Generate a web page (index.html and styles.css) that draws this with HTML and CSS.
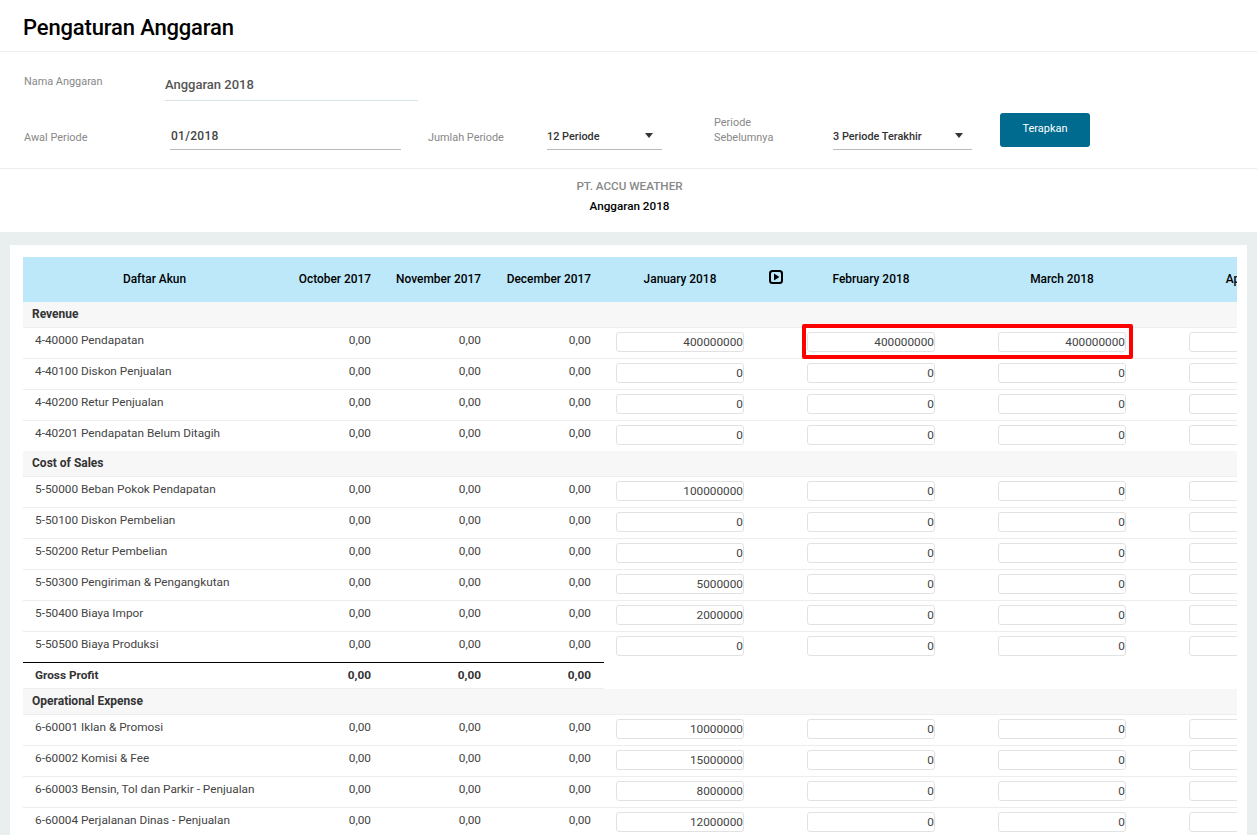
FILE: index.html
```html
<!DOCTYPE html>
<html lang="id">
<head>
<meta charset="utf-8">
<title>Pengaturan Anggaran</title>
<link rel="stylesheet" href="styles.css">
</head>
<body>
<header class="page-head"><h1>Pengaturan Anggaran</h1></header>
<section class="form">
  <div class="row-name">
    <span class="lbl lbl-name">Nama Anggaran</span>
    <span class="name-value">Anggaran 2018</span>
  </div>
  <div class="row-period">
    <span class="lbl lbl-awal">Awal Periode</span>
    <span class="field f-awal">01/2018</span>
    <span class="lbl lbl-jumlah">Jumlah Periode</span>
    <span class="select s-jumlah">12 Periode<i class="caret"></i></span>
    <span class="lbl lbl-prev">Periode<br>Sebelumnya</span>
    <span class="select s-prev">3 Periode Terakhir<i class="caret"></i></span>
    <button class="apply" type="button">Terapkan</button>
  </div>
</section>
<section class="report-head">
  <div class="company">PT. ACCU WEATHER</div>
  <div class="report-name">Anggaran 2018</div>
</section>
<main class="stage">
  <div class="panel">
    <div class="scroller">
      <table class="budget">
        <colgroup><col class="c-acc"><col class="c-num"><col class="c-num"><col class="c-num"><col class="c-in"><col class="c-in"><col class="c-in"><col class="c-in"></colgroup>
        <thead>
          <tr>
            <th class="th-acc">Daftar Akun</th>
            <th class="th-num">October 2017</th>
            <th class="th-num">November 2017</th>
            <th class="th-num">December 2017</th>
            <th class="th-in">January 2018<svg class="next" viewBox="0 0 14 14" width="14" height="14"><rect x="1" y="1" width="12" height="12" rx="2.5" fill="none" stroke="#000" stroke-width="2"/><path d="M5 3.6v6.8L10.4 7z" fill="#000"/></svg></th>
            <th class="th-in">February 2018</th>
            <th class="th-in">March 2018</th>
            <th class="th-in">April 2018</th>
          </tr>
        </thead>
        <tbody id="rows"></tbody>
      </table>
      <div class="highlight"></div>
    </div>
  </div>
</main>
<script src="app.js"></script>
</body>
</html>
```
FILE: styles.css
```css
* { box-sizing: border-box; }
html, body { margin: 0; height: 835px; overflow: hidden; }
body { background: #fff; font-family: Roboto, "Liberation Sans", sans-serif; color: #333; display: flex; flex-direction: column; }

.page-head { height: 52px; border-bottom: 1px solid #eceeee; padding: 14px 23px 0; }
.page-head h1 { margin: 0; font-size: 22px; line-height: 28px; font-weight: 500; color: #000; letter-spacing: -0.15px; }

.form { height: 117px; border-bottom: 1px solid #eceeee; padding-left: 24px; position: relative; }
.lbl { font-size: 10.9px; line-height: 15px; color: #888; font-weight: 400; }
.row-name { display: flex; height: 49px; padding-top: 22px; }
.lbl-name { width: 141px; }
.name-value { width: 253px; height: 28px; margin-top: -1px; line-height: 24px; font-size: 13px; font-weight: 500; color: #555; border-bottom: 1px solid #d8e2e6; }
.row-period { display: flex; align-items: flex-start; height: 66px; position: relative; }
.lbl-awal { width: 146px; margin-top: 29px; }
.field { width: 231px; height: 30px; margin-top: 19px; padding: 6px 0 0 1px; font-size: 12px; font-weight: 500; line-height: 20px; border-bottom: 1px solid #bbb; color: #444; letter-spacing: .3px; }
.lbl-jumlah { width: 119px; margin-left: 27px; margin-top: 29px; }
.select { position: relative; height: 30px; margin-top: 19px; padding-top: 6px; font-size: 10.9px; font-weight: 500; line-height: 21px; border-bottom: 1px solid #bbb; color: #333; }
.s-jumlah { width: 115px; }
.lbl-prev { width: 119px; margin-left: 52px; margin-top: 14px; }
.s-prev { width: 139px; }
.caret { position: absolute; right: 9px; top: 13px; border: 4.5px solid transparent; border-top: 5px solid #333; border-bottom: 0; }
.apply { width: 90px; height: 34px; margin: 12px 0 0 28px; border: 0; border-radius: 3px; background: #006b8f; color: #fff; font: 400 11px/30px Roboto, "Liberation Sans", sans-serif; padding: 0 0 3px; }

.report-head { height: 63px; text-align: center; padding: 10px 0 0 2px; }
.company { font-size: 11.7px; line-height: 14px; font-weight: 500; color: #888; }
.report-name { font-size: 11.7px; line-height: 14px; font-weight: 500; color: #000; margin-top: 6px; }

.stage { flex: 1; min-height: 0; background: #e9efef; padding: 13px 10px 0; overflow: hidden; }
.panel { background: #fff; height: 100%; padding: 12px 10px 0 13px; }
.scroller { position: relative; height: 100%; overflow: hidden; }

.budget { table-layout: fixed; width: 1345px; border-collapse: separate; border-spacing: 0; font-size: 11.8px; color: #444; }
.c-acc { width: 251px; }
.c-num { width: 110px; }
.c-in { width: 191px; }

.budget thead th { height: 45px; background: #bce8fa; color: #000; font-size: 11.9px; font-weight: 500; padding: 0 0 2px; white-space: nowrap; }
.budget .th-acc { text-align: center; padding-left: 12px; }
.budget .th-num { text-align: right; padding-right: 13px; }
.budget .th-in { text-align: center; position: relative; padding-left: 12px; padding-right: 51px; }
.next { position: absolute; left: 165px; top: 13px; }

.sec td { height: 26px; background: #f7f7f7; border-bottom: 1px solid #eceeee; font-weight: 700; font-size: 12px; color: #333; padding: 0 0 1px 9px; }
.acc td { height: 31px; padding: 0; border-bottom: 1px solid #eceeee; }
.acc .name { padding: 0 0 6px 12px; white-space: nowrap; }
.acc .num { text-align: right; padding: 0 13px 6px 0; }
.acc .cell { padding: 4px 51px 0 12px; vertical-align: top; }
.acc.last td { height: 30px; border-bottom: 0; }

.total td { height: 27px; padding: 0 0 2px; font-weight: 700; color: #333; border-top: 1px solid #000; border-bottom: 1px solid #eceeee; }
.total .name { padding: 0 0 2px 12px; }
.total .num { text-align: right; padding: 0 13px 2px 0; }
.total td.blank { border: 0; }

.amount { display: block; height: 20px; width: 128px; margin: 0; border: 1px solid #e2e2e2; border-radius: 3px; background: #fff; text-align: right; font: 400 11.8px/18px Roboto, "Liberation Sans", sans-serif; padding: 0; color: #444; }

.highlight { position: absolute; left: 779px; top: 67px; width: 331px; height: 35px; border: 4px solid #f00; border-radius: 2px; pointer-events: none; }
```
FILE: app.js
```js
var data = [
  ['s', 'Revenue'],
  ['4-40000 Pendapatan', '400000000', '400000000', '400000000'],
  ['4-40100 Diskon Penjualan', '0', '0', '0'],
  ['4-40200 Retur Penjualan', '0', '0', '0'],
  ['4-40201 Pendapatan Belum Ditagih', '0', '0', '0'],
  ['s', 'Cost of Sales'],
  ['5-50000 Beban Pokok Pendapatan', '100000000', '0', '0'],
  ['5-50100 Diskon Pembelian', '0', '0', '0'],
  ['5-50200 Retur Pembelian', '0', '0', '0'],
  ['5-50300 Pengiriman & Pengangkutan', '5000000', '0', '0'],
  ['5-50400 Biaya Impor', '2000000', '0', '0'],
  ['5-50500 Biaya Produksi', '0', '0', '0'],
  ['t', 'Gross Profit'],
  ['s', 'Operational Expense'],
  ['6-60001 Iklan & Promosi', '10000000', '0', '0'],
  ['6-60002 Komisi & Fee', '15000000', '0', '0'],
  ['6-60003 Bensin, Tol dan Parkir - Penjualan', '8000000', '0', '0'],
  ['6-60004 Perjalanan Dinas - Penjualan', '12000000', '0', '0']
];
function esc(s) { return s.replace(/&/g, '&amp;'); }
var html = '';
data.forEach(function (r, idx) {
  var next = data[idx + 1];
  if (r[0] === 's') {
    html += '<tr class="sec"><td colspan="8">' + r[1] + '</td></tr>';
  } else if (r[0] === 't') {
    html += '<tr class="total"><td class="name">' + r[1] + '</td><td class="num">0,00</td><td class="num">0,00</td><td class="num">0,00</td><td class="blank" colspan="4"></td></tr>';
  } else {
    var last = next && (next[0] === 's' || next[0] === 't');
    html += '<tr class="acc' + (last ? ' last' : '') + '"><td class="name">' + esc(r[0]) + '</td><td class="num">0,00</td><td class="num">0,00</td><td class="num">0,00</td>';
    for (var i = 1; i <= 3; i++) {
      html += '<td class="cell"><input class="amount" value="' + r[i] + '"></td>';
    }
    html += '<td class="cell"><input class="amount" value=""></td></tr>';
  }
});
document.getElementById('rows').innerHTML = html;
```
